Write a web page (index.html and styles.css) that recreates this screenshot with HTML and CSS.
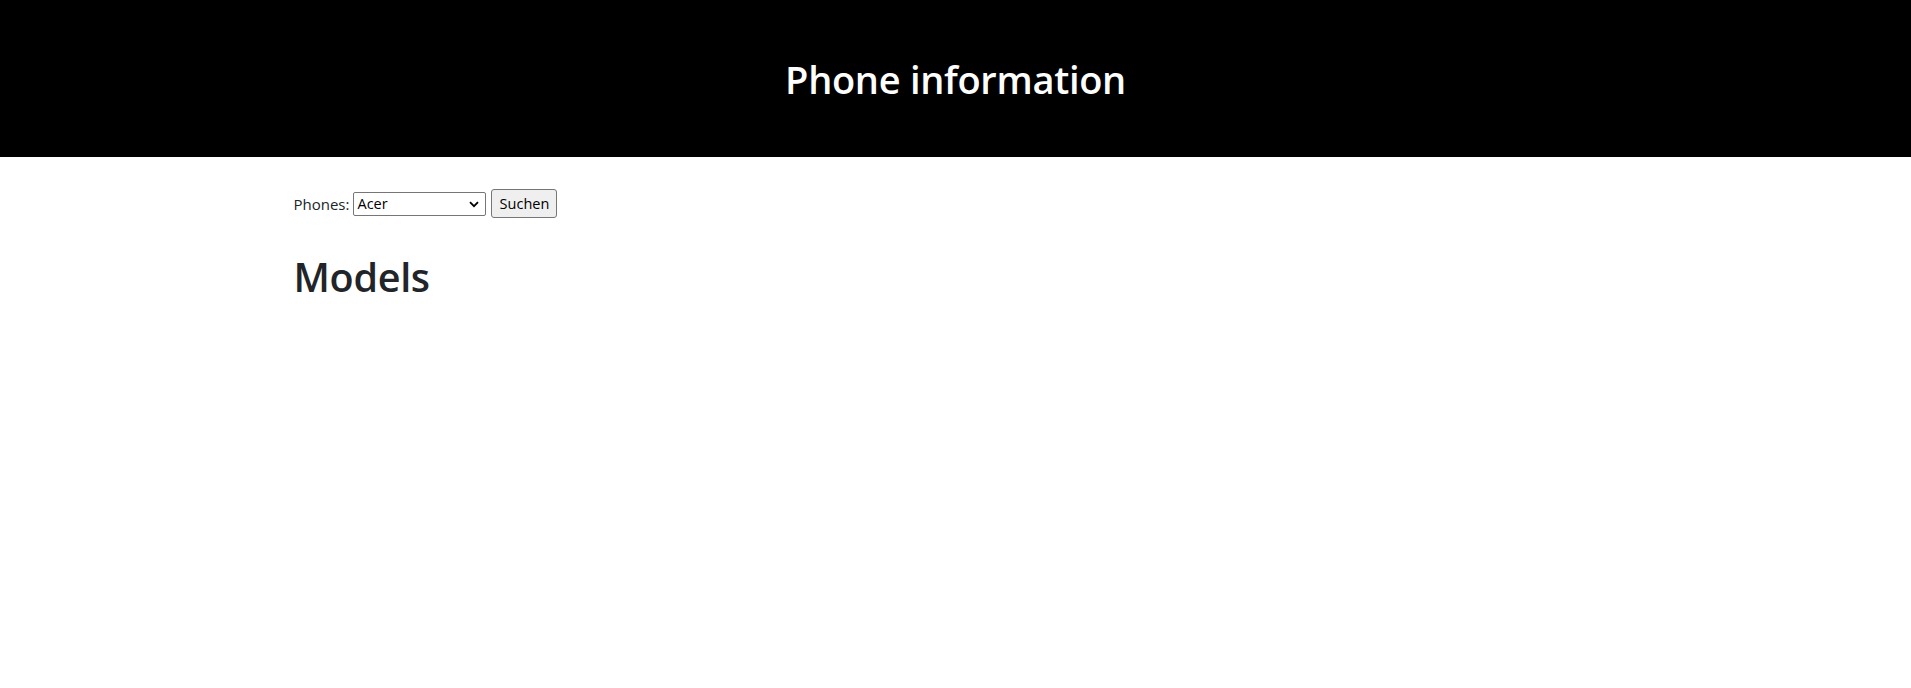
FILE: index.html
```html
<!DOCTYPE html>
<html lang="de">
<head>
<meta charset="utf-8">
<title>Phone information</title>
<link rel="stylesheet" href="styles.css">
</head>
<body>
<header class="site-header">
  <h1 class="site-title">Phone information</h1>
</header>
<main class="container">
  <form class="search-form">
    <label class="phones-label" for="phones">Phones:</label>
    <span class="select-wrap">
      <select id="phones" class="phones-select">
        <option>Acer</option>
      </select>
      <svg class="chevron" width="10" height="7" viewBox="0 0 10 7"><path d="M1 1.2 L5 5.2 L9 1.2" fill="none" stroke="#000" stroke-width="1.8"/></svg>
    </span>
    <button type="button" class="search-btn">Suchen</button>
  </form>
  <h2 class="models-title">Models</h2>
</main>
</body>
</html>
```
FILE: styles.css
```css
html, body {
  margin: 0;
  padding: 0;
  background: #fff;
}
body {
  font-family: "Open Sans", "Noto Sans", sans-serif;
  color: #212529;
}
.site-header {
  background: #000;
  height: 157px;
  display: flex;
  align-items: center;
  justify-content: center;
}
.site-title {
  margin: 0;
  color: #fff;
  font-family: "Open Sans", sans-serif;
  font-weight: 600;
  font-size: 38px;
  line-height: 1.2;
  letter-spacing: -0.3px;
  position: relative;
  top: 1px;
}
.container {
  width: 1324px;
  margin: 0 auto;
  padding-top: 32px;
  box-sizing: border-box;
}
.search-form {
  display: flex;
  align-items: center;
  height: 29px;
}
.phones-label {
  font-size: 15px;
  color: #212529;
  margin-right: 4px;
  padding-top: 1px;
}
.select-wrap {
  position: relative;
  display: inline-block;
  width: 133px;
  height: 24px;
}
.phones-select {
  appearance: none;
  -webkit-appearance: none;
  width: 133px;
  height: 24px;
  box-sizing: border-box;
  border: 1px solid #767676;
  border-radius: 2px;
  background: #fff;
  font-family: "Open Sans", sans-serif;
  font-size: 14.5px;
  color: #000;
  padding: 0 0 0 3px;
  margin: 0;
}
.chevron {
  position: absolute;
  right: 7px;
  top: 9px;
  pointer-events: none;
}
.search-btn {
  margin-left: 5px;
  width: 66px;
  height: 29px;
  box-sizing: border-box;
  border: 1px solid #767676;
  border-radius: 3px;
  background: #efefef;
  font-family: "Open Sans", sans-serif;
  font-size: 14.5px;
  color: #000;
  padding: 0;
}
.models-title {
  margin: 36px 0 0 0;
  font-family: "Open Sans", sans-serif;
  font-weight: 600;
  font-size: 39.5px;
  line-height: 1.2;
  letter-spacing: -0.3px;
  color: #212529;
}
```
